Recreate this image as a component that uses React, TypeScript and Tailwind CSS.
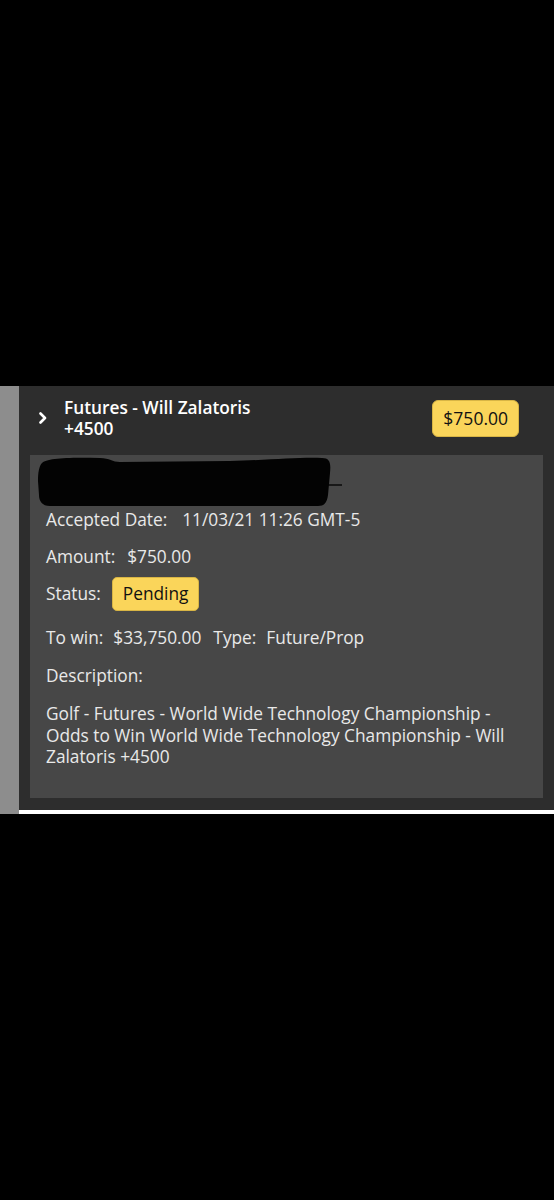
import React from "react";

const font = { fontFamily: '"Open Sans", "Noto Sans", sans-serif' };

function Chevron() {
  return (
    <svg width="10" height="12" viewBox="0 0 10 12" className="shrink-0">
      <path d="M2.5 1.5 L7 6 L2.5 10.5" fill="none" stroke="#ffffff" strokeWidth="2.6" strokeLinecap="round" strokeLinejoin="round" />
    </svg>
  );
}

function Redaction() {
  return (
    <svg width="320" height="52" viewBox="0 0 320 52" className="block">
      <path
        d="M12 8 C16 3 40 2 70 3 C80 3 82 7 90 7 L200 6 C240 5 270 2 292 3 C300 3 301 8 300 18 L298 40 C297 48 294 51 288 51 L20 51 C12 51 9 46 9 40 L8 26 C8 18 9 11 12 8 Z"
        fill="#030303"
      />
      <path d="M296 30 L312 30" stroke="#050505" strokeWidth="1.4" />
    </svg>
  );
}

export default function App() {
  return (
    <div className="w-full h-[1200px] bg-black pt-[386px]" style={font}>
      <div className="flex">
        <div className="w-[19px] bg-[#8d8d8d] h-[428px]" />
        <div className="flex-1 flex flex-col">
          <div className="bg-[#2d2d2d] pb-[12px]">
            {/* header */}
            <div className="h-[69px] flex items-center pl-[19px] pr-[35px] pb-[5px]">
              <Chevron />
              <div className="ml-[16px] flex-1 text-white text-[17.3px] leading-[21px] font-semibold">
                <div>Futures - Will Zalatoris</div>
                <div>+4500</div>
              </div>
              <div className="h-[37px] px-[10px] flex items-center rounded-[6px] bg-[#fad55a] border border-[#d8b545] text-[#111] text-[17.5px]">
                $750.00
              </div>
            </div>
            {/* detail box */}
            <div className="mx-[11px] bg-[#474747] pb-[30px] text-[#e9e9e9] text-[17.3px] leading-[22px]">
              <Redaction />
              <div className="pl-[16px] pt-[2px]">
                <div className="flex gap-[15px]">
                  <span>Accepted Date:</span>
                  <span>11/03/21 11:26 GMT-5</span>
                </div>
                <div className="flex gap-[12px] mt-[15px]">
                  <span>Amount:</span>
                  <span>$750.00</span>
                </div>
                <div className="flex items-center gap-[11px] mt-[9px]">
                  <span>Status:</span>
                  <span className="h-[34px] px-[10px] flex items-center rounded-[5px] bg-[#fad55a] border border-[#d8b545] text-[#111]">
                    Pending
                  </span>
                </div>
                <div className="flex mt-[16px]">
                  <span>To win:</span>
                  <span className="ml-[10px]">$33,750.00</span>
                  <span className="ml-[12px]">Type:</span>
                  <span className="ml-[10px]">Future/Prop</span>
                </div>
                <div className="mt-[16px]">Description:</div>
                <p className="mt-[16px] pr-[20px] leading-[21.5px]">
                  Golf - Futures - World Wide Technology Championship - Odds to Win World Wide Technology Championship - Will Zalatoris +4500
                </p>
              </div>
            </div>
          </div>
          <div className="h-[4px] bg-white" />
        </div>
      </div>
    </div>
  );
}
